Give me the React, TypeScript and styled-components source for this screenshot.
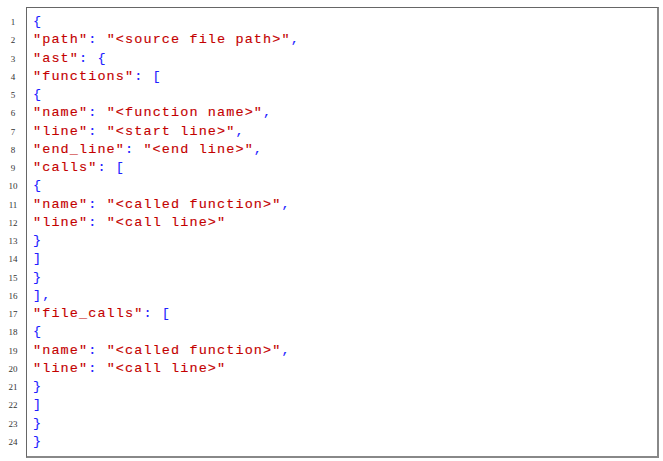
import React from "react";
import styled, { createGlobalStyle } from "styled-components";

const Global = createGlobalStyle`
  html, body { margin: 0; padding: 0; background: #ffffff; }
`;

const Page = styled.div`
  display: flex;
  align-items: flex-start;
  padding-top: 7px;
  width: 663px;
  height: 461px;
  box-sizing: border-box;
  background: #fff;
`;

const Gutter = styled.div`
  width: 26px;
  display: flex;
  flex-direction: column;
  padding-top: 6px;
`;

const LineNo = styled.div`
  height: 18.26px;
  line-height: 18.26px;
  text-align: center;
  font-family: "Liberation Serif", "DejaVu Serif", serif;
  font-size: 9px;
  color: #333;
`;

const Frame = styled.div`
  width: 633px;
  height: 451px;
  box-sizing: border-box;
  border-top: 1px solid #666;
  border-left: 1px solid #666;
  border-right: 2px solid #888;
  border-bottom: 2px solid #888;
  padding: 5px 0 0 6px;
  display: flex;
  flex-direction: column;
`;

const CodeLine = styled.div`
  height: 18.26px;
  line-height: 18.26px;
  font-family: "Liberation Mono", "DejaVu Sans Mono", monospace;
  font-size: 13.5px;
  letter-spacing: 1.1px;
  -webkit-text-stroke: 0.12px currentColor;
  white-space: pre;
`;

const Str = styled.span`
  color: #c40000;
`;

const Punct = styled.span`
  color: #1f1fff;
`;

type Tok = { t: string; k: "s" | "p" };

const s = (t: string): Tok => ({ t, k: "s" });
const p = (t: string): Tok => ({ t, k: "p" });

const lines: Tok[][] = [
  [p("{")],
  [s('"path"'), p(": "), s('"<source file path>"'), p(",")],
  [s('"ast"'), p(": {")],
  [s('"functions"'), p(": [")],
  [p("{")],
  [s('"name"'), p(": "), s('"<function name>"'), p(",")],
  [s('"line"'), p(": "), s('"<start line>"'), p(",")],
  [s('"end_line"'), p(": "), s('"<end line>"'), p(",")],
  [s('"calls"'), p(": [")],
  [p("{")],
  [s('"name"'), p(": "), s('"<called function>"'), p(",")],
  [s('"line"'), p(": "), s('"<call line>"')],
  [p("}")],
  [p("]")],
  [p("}")],
  [p("],")],
  [s('"file_calls"'), p(": [")],
  [p("{")],
  [s('"name"'), p(": "), s('"<called function>"'), p(",")],
  [s('"line"'), p(": "), s('"<call line>"')],
  [p("}")],
  [p("]")],
  [p("}")],
  [p("}")],
];

export default function App() {
  return (
    <>
      <Global />
      <Page>
        <Gutter>
          {lines.map((_, i) => (
            <LineNo key={i}>{i + 1}</LineNo>
          ))}
        </Gutter>
        <Frame>
          {lines.map((toks, i) => (
            <CodeLine key={i}>
              {toks.map((tk, j) =>
                tk.k === "s" ? <Str key={j}>{tk.t}</Str> : <Punct key={j}>{tk.t}</Punct>
              )}
            </CodeLine>
          ))}
        </Frame>
      </Page>
    </>
  );
}
